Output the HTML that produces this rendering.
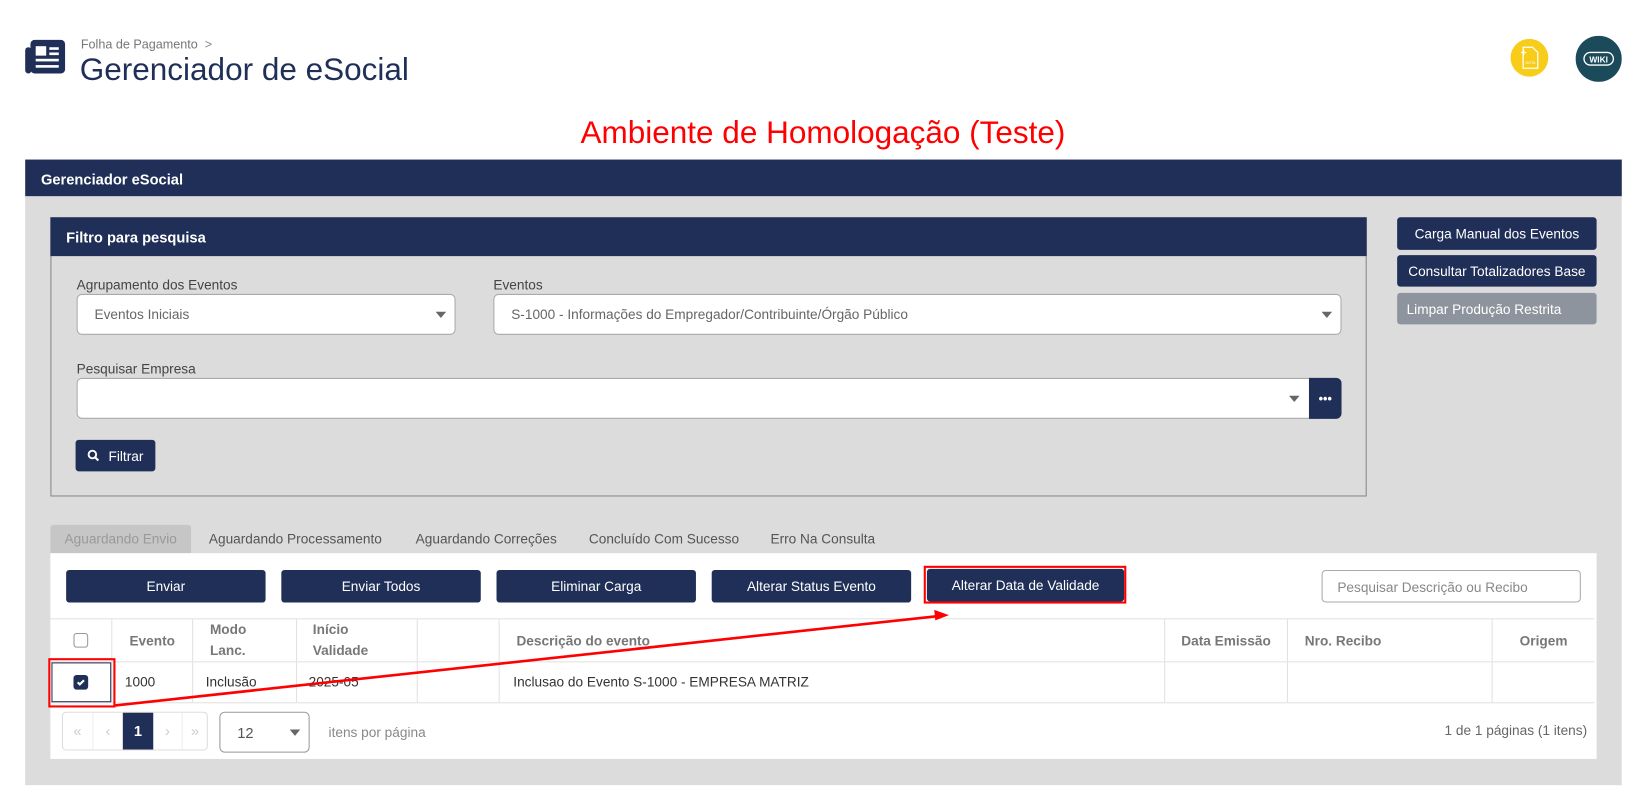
<!DOCTYPE html>
<html><head><meta charset="utf-8"><style>
*{box-sizing:border-box;margin:0;padding:0}
html,body{width:1646px;height:808px;overflow:hidden;background:#fff;font-family:"Liberation Sans",Arial,sans-serif}
#w{position:absolute;left:0;top:0;width:1568px;height:770px;transform:scale(1.0497);transform-origin:0 0}
.a{position:absolute}
.nv{background:#1f2f57;color:#fff}
.btn{position:absolute;background:#1f2f57;color:#fff;font-size:13px;border-radius:3px;display:flex;align-items:center;justify-content:center}
.lbl{position:absolute;font-size:13px;color:#444}
.sel{position:absolute;background:#fff;border:1px solid #aaa;border-radius:5px;font-size:13px;color:#666;padding-left:16px;display:flex;align-items:center}
.car{position:absolute;right:8px;top:50%;margin-top:-3px;border-left:5px solid transparent;border-right:5px solid transparent;border-top:6px solid #666}
.tab{position:absolute;top:500px;height:27px;font-size:13px;color:#555;line-height:27px}
.th{position:absolute;top:590px;height:40px;font-size:13px;color:#777;font-weight:bold;border-right:1px solid #e2e2e2;display:flex;align-items:center}
.td{position:absolute;top:630px;height:39px;font-size:13px;color:#333;border-right:1px solid #e2e2e2;display:flex;align-items:center}
</style></head><body><div id="w">
<svg class="a" style="left:23px;top:37px" width="40" height="34" viewBox="0 0 40 34"><rect x="6" y="1" width="33" height="32" rx="4" fill="#1f2f57"/><rect x="1" y="8" width="6" height="25" rx="3" fill="#1f2f57"/><rect x="11" y="7" width="10" height="9" fill="#fff"/><rect x="24" y="8" width="9" height="2.5" fill="#fff"/><rect x="24" y="13" width="9" height="2.5" fill="#fff"/><rect x="11" y="19" width="22" height="2.5" fill="#fff"/><rect x="11" y="25" width="22" height="2.5" fill="#fff"/></svg>
<div class="a" style="left:77px;top:35px;font-size:12px;color:#777">Folha de Pagamento &nbsp;<span style="color:#888">&gt;</span></div>
<div class="a" style="left:76px;top:50px;font-size:30px;color:#1f2f57">Gerenciador de eSocial</div>
<svg class="a" style="left:1438px;top:36px" width="38" height="38"><circle cx="19" cy="19" r="18" fill="#f7cd1a"/><path d="M13 9h9l5 5v15h-14z" fill="none" stroke="#fff" stroke-width="1.2"/><path d="M11 14h5M13.5 11.5v5" stroke="#fff" stroke-width="1.2"/><text x="20" y="25" font-size="3.5" fill="#fff" text-anchor="middle">NOTA</text></svg>
<svg class="a" style="left:1501px;top:34px" width="44" height="44"><circle cx="22" cy="22" r="22" fill="#1b4a5a"/><rect x="8" y="16" width="28" height="12" rx="6" fill="none" stroke="#fff" stroke-width="1.3"/><text x="22" y="25.5" font-size="8" font-weight="bold" fill="#fff" text-anchor="middle" font-family="Liberation Sans">WIKI</text></svg>
<div class="a" style="left:0;width:1568px;top:110px;text-align:center;font-size:30px;color:#f00">Ambiente de Homologação (Teste)</div>
<div class="a nv" style="left:24px;top:152px;width:1521px;height:35px;font-size:14px;font-weight:bold;padding:11px 15px">Gerenciador eSocial</div>
<div class="a" style="left:24px;top:187px;width:1521px;height:561px;background:#dcdcdc"></div>
<div class="a" style="left:48px;top:207px;width:1254px;height:266px;border:1px solid #888;background:#dcdcdc"></div>
<div class="a nv" style="left:48px;top:207px;width:1254px;height:37px;font-size:14px;font-weight:bold;padding:11px 15px">Filtro para pesquisa</div>
<div class="btn" style="left:1331px;top:207px;width:190px;height:31px">Carga Manual dos Eventos</div>
<div class="btn" style="left:1331px;top:243px;width:190px;height:30px">Consultar Totalizadores Base</div>
<div class="btn" style="left:1331px;top:279px;width:190px;height:30px;background:#8e949d;justify-content:flex-start;padding-left:9px">Limpar Produção Restrita</div>
<div class="lbl" style="left:73px;top:264px">Agrupamento dos Eventos</div>
<div class="sel" style="left:73px;top:280px;width:361px;height:39px">Eventos Iniciais<div class="car"></div></div>
<div class="lbl" style="left:470px;top:264px">Eventos</div>
<div class="sel" style="left:470px;top:280px;width:808px;height:39px;padding-left:16px">S-1000 - Informações do Empregador/Contribuinte/Órgão Público<div class="car"></div></div>
<div class="lbl" style="left:73px;top:344px">Pesquisar Empresa</div>
<div class="sel" style="left:73px;top:360px;width:1180px;height:39px;border-radius:5px 0 0 5px"><div class="car" style="right:14px"></div></div>
<div class="btn" style="left:1247px;top:360px;width:31px;height:39px;border-radius:0 5px 5px 0;font-weight:bold;font-size:12px">•••</div>
<div class="btn" style="left:72px;top:419px;width:76px;height:30px;font-size:13px"><svg width="12" height="12" viewBox="0 0 12 12" style="margin-right:8px"><circle cx="5" cy="5" r="3.6" fill="none" stroke="#fff" stroke-width="1.8"/><path d="M7.7 7.7l3 3" stroke="#fff" stroke-width="2"/></svg>Filtrar</div>
<div class="tab" style="left:48px;width:134px;background:#c6c6c6;color:#999;text-align:center;border-radius:3px 3px 0 0">Aguardando Envio</div>
<div class="tab" style="left:199px">Aguardando Processamento</div>
<div class="tab" style="left:396px">Aguardando Correções</div>
<div class="tab" style="left:561px">Concluído Com Sucesso</div>
<div class="tab" style="left:734px">Erro Na Consulta</div>
<div class="a" style="left:48px;top:527px;width:1473px;height:196px;background:#fff"></div>
<div class="btn" style="left:63px;top:543px;width:190px;height:31px">Enviar</div>
<div class="btn" style="left:268px;top:543px;width:190px;height:31px">Enviar Todos</div>
<div class="btn" style="left:473px;top:543px;width:190px;height:31px">Eliminar Carga</div>
<div class="btn" style="left:678px;top:543px;width:190px;height:31px">Alterar Status Evento</div>
<div class="btn" style="left:883px;top:542px;width:188px;height:31px">Alterar Data de Validade</div>
<div class="a" style="left:880px;top:539px;width:193px;height:36px;border:2px solid #f00"></div>
<div class="a" style="left:1259px;top:543px;width:247px;height:31px;border:1px solid #aaa;border-radius:4px;font-size:13px;color:#888;padding:8px 14px">Pesquisar Descrição ou Recibo</div>
<div class="a" style="left:48px;top:589px;width:1471px;height:81px;border-top:1px solid #e2e2e2;border-bottom:1px solid #e2e2e2"></div>
<div class="a" style="left:48px;top:630px;width:1471px;border-top:1px solid #e2e2e2"></div>
<div class="th" style="left:48px;width:59px;justify-content:center"><div style="width:14px;height:14px;border:1px solid #999;border-radius:3px"></div></div>
<div class="th" style="left:107px;width:77px;justify-content:center">Evento</div>
<div class="th" style="left:184px;width:99px;padding-left:16px;line-height:20px">Modo<br>Lanc.</div>
<div class="th" style="left:283px;width:115px;padding-left:15px;line-height:20px">Início<br>Validade</div>
<div class="th" style="left:398px;width:78px"></div>
<div class="th" style="left:476px;width:634px;padding-left:16px">Descrição do evento</div>
<div class="th" style="left:1110px;width:117px;justify-content:center">Data Emissão</div>
<div class="th" style="left:1227px;width:195px;padding-left:16px">Nro. Recibo</div>
<div class="th" style="left:1422px;width:97px;justify-content:center;border-right:none">Origem</div>
<div class="td" style="left:48px;width:59px;justify-content:center"><div style="width:14px;height:14px;background:#1f2f57;border-radius:3px;display:flex;align-items:center;justify-content:center"><svg width="10" height="10" viewBox="0 0 10 10"><path d="M2 5l2 2 4-4" stroke="#fff" stroke-width="2" fill="none"/></svg></div></div>
<div class="a" style="left:49px;top:631px;width:57px;height:38px;border:1px solid #1f2f57"></div>
<div class="td" style="left:107px;width:77px;padding-left:12px">1000</div>
<div class="td" style="left:184px;width:99px;padding-left:12px">Inclusão</div>
<div class="td" style="left:283px;width:115px;padding-left:11px">2025-05</div>
<div class="td" style="left:398px;width:78px"></div>
<div class="td" style="left:476px;width:634px;padding-left:13px">Inclusao do Evento S-1000 - EMPRESA MATRIZ</div>
<div class="td" style="left:1110px;width:117px"></div>
<div class="td" style="left:1227px;width:195px"></div>
<div class="a" style="left:46px;top:627px;width:64px;height:47px;border:2px solid #f00"></div>
<svg class="a" style="left:0;top:0" width="1568" height="770"><line x1="110" y1="672" x2="893" y2="587" stroke="#f00" stroke-width="2.5"/><path d="M904 586l-14-5 1 10z" fill="#f00"/></svg>
<div class="a" style="left:59px;top:678px;width:139px;height:37px;border:1px solid #ddd;border-radius:4px;display:flex;font-size:14px;color:#ccc">
<div style="width:29px;text-align:center;line-height:35px;border-right:1px solid #eee">«</div><div style="width:29px;text-align:center;line-height:35px">‹</div><div style="width:29px;text-align:center;line-height:35px;background:#1f2f57;color:#fff;font-weight:bold">1</div><div style="width:29px;text-align:center;line-height:35px;border-right:1px solid #eee">›</div><div style="width:23px;text-align:center;line-height:35px">»</div></div>
<div class="sel" style="left:209px;top:678px;width:86px;height:39px;border-color:#999;color:#555;font-size:14px">12<div class="car" style="right:8px"></div></div>
<div class="a" style="left:313px;top:690px;font-size:13px;color:#888">itens por página</div>
<div class="a" style="right:56px;top:688px;font-size:13px;color:#666">1 de 1 páginas (1 itens)</div>
</div></body></html>
